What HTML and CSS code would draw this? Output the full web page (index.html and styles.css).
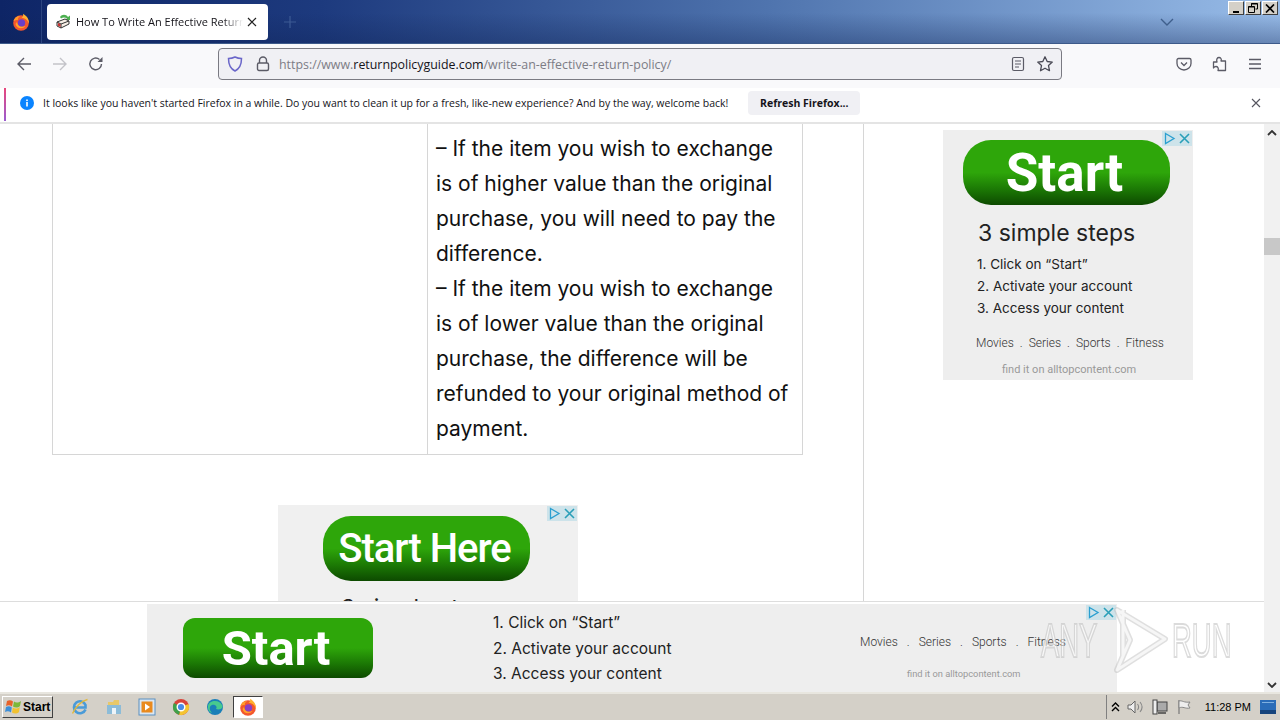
FILE: index.html
```html
<!DOCTYPE html>
<html lang="en">
    <head>
        <meta charset="UTF-8" />
        <meta name="viewport" content="width=device-width, initial-scale=1.0" />
        <title>How To Write An Effective Return Policy</title>
        <link rel="stylesheet" href="styles.css">
    </head>
    <body>
        <!-- title bar -->
        <header class="titlebar">
            <div class="ff-button">
                <svg width="18" height="18" viewBox="0 0 18 18"><circle cx="9" cy="10" r="7.8" fill="#f4572d"/><path d="M11 .8 C15 3 17.500 7 16.800 10.500 C15.500 7 13 5 9.500 4.800 C11 4 11.500 2.500 11 .8Z" fill="#ffb02e"/><path d="M1.500 8 C3 4 6 2.800 8 3.500 C6 4.500 5.500 6 6 7 C4 7 2.500 7.500 1.500 8Z" fill="#ff9c2a"/><circle cx="9.500" cy="10" r="3.700" fill="#6a3fc8"/><path d="M5 9 C5.500 13 9 15 13.500 13 C11 16.500 4.500 16 3.500 11 Z" fill="#ffa32c"/></svg>
            </div>
            <div class="tab">
                <svg class="favicon" width="16" height="16" viewBox="0 0 16 16"><path d="M4 3 C6 0 10 0 12 3 L14 1.500 L14 6 L9.500 6 L11 4.500 C9 3 7 3 5 4.500Z" fill="#4caf50"/><path d="M1 8 L9 5 L13 7 L13 10 L5 14 L1 12Z" fill="#f7efe6" stroke="#333" stroke-width="1"/><path d="M5 10 L13 7 M5 10 L5 14 M1 8 L5 10" stroke="#333" stroke-width="1" fill="none"/><path d="M2 9 L4.500 10.200 L4.500 13 L2 11.800Z" fill="#c33"/></svg>
                <span class="tab-title">How To Write An Effective Return Policy</span>
                <svg class="tab-close" width="10" height="10" viewBox="0 0 10 10"><path d="M1 1 L9 9 M9 1 L1 9" stroke="#222" stroke-width="1.200"/></svg>
            </div>
            <svg class="new-tab" width="14" height="14" viewBox="0 0 14 14"><path d="M7 1 V13 M1 7 H13" stroke="#3d5a94" stroke-width="1.200"/></svg>
            <div class="titlebar-fill"></div>
            <svg class="tabs-menu" width="14" height="8" viewBox="0 0 14 8"><path d="M1 1 L7 7 L13 1" stroke="#3f5f8c" stroke-width="1.400" fill="none"/></svg>
            <div class="win-buttons">
                <div class="win-btn"><svg width="9" height="9" viewBox="0 0 9 9"><rect x="1" y="7" width="6" height="2" fill="#000"/></svg></div>
                <div class="win-btn"><svg width="10" height="10" viewBox="0 0 10 10"><path d="M3.500 .5 H9.500 V6 H7.500 M.5 3.500 H6.500 V9.500 H.5Z M3.500 .5 V3.500" fill="none" stroke="#000"/><path d="M3 1 H9.500 M.5 4 H6.500" stroke="#000"/></svg></div>
                <div class="win-btn"><svg width="10" height="9" viewBox="0 0 10 9"><path d="M1 .5 L9 8.500 M9 .5 L1 8.500" stroke="#000" stroke-width="1.700"/></svg></div>
            </div>
        </header>

        <!-- toolbar -->
        <nav class="toolbar">
            <svg class="nav-icon" width="16" height="16" viewBox="0 0 16 16"><path d="M15 8 H2 M8 2 L2 8 L8 14" stroke="#5b5b66" stroke-width="1.400" fill="none"/></svg>
            <svg class="nav-icon" width="16" height="16" viewBox="0 0 16 16"><path d="M1 8 H14 M8 2 L14 8 L8 14" stroke="#c3c3c9" stroke-width="1.400" fill="none"/></svg>
            <svg class="nav-icon" width="16" height="16" viewBox="0 0 16 16"><path d="M13.500 8 A5.800 5.800 0 1 1 11.500 3.500" stroke="#5b5b66" stroke-width="1.400" fill="none"/><path d="M14.500 1 V6 H9.500Z" fill="#5b5b66"/></svg>
            <div class="urlbar">
                <svg class="shield" width="16" height="16" viewBox="0 0 16 16"><path d="M8 1 C10 2 12.500 2.500 14.500 2.500 C14.500 9 12 13 8 15 C4 13 1.500 9 1.500 2.500 C3.500 2.500 6 2 8 1Z" fill="none" stroke="#6a66c9" stroke-width="1.500"/></svg>
                <svg class="lock" width="14" height="16" viewBox="0 0 14 16"><path d="M3.500 7 V4.500 A3.500 3.500 0 0 1 10.500 4.500 V7" fill="none" stroke="#5b5b66" stroke-width="1.400"/><rect x="1.500" y="7" width="11" height="7.500" rx="1.500" fill="none" stroke="#5b5b66" stroke-width="1.400"/></svg>
                <span class="url"><span class="url-dim">https://www.</span>returnpolicyguide.com<span class="url-dim">/write-an-effective-return-policy/</span></span>
                <svg width="14" height="16" viewBox="0 0 14 16"><rect x="1.500" y="1.500" width="11" height="13" rx="1.500" fill="none" stroke="#5b5b66" stroke-width="1.200"/><path d="M4 5 H10 M4 8 H10 M4 11 H8" stroke="#5b5b66" stroke-width="1.200"/></svg>
                <svg class="star" width="18" height="18" viewBox="0 0 18 18"><path d="M9 1.800 L11.200 6.500 L16.300 7.100 L12.500 10.600 L13.500 15.700 L9 13.200 L4.500 15.700 L5.500 10.600 L1.700 7.100 L6.800 6.500Z" fill="none" stroke="#4a4a55" stroke-width="1.300" stroke-linejoin="round"/></svg>
            </div>
            <svg class="tool-pocket" width="16" height="16" viewBox="0 0 16 16"><path d="M2.500 2.500 H13.500 A1.500 1.500 0 0 1 15 4 V7.500 A7 6.500 0 0 1 1 7.500 V4 A1.500 1.500 0 0 1 2.500 2.500Z" fill="none" stroke="#5b5b66" stroke-width="1.300"/><path d="M5 6.500 L8 9.500 L11 6.500" fill="none" stroke="#5b5b66" stroke-width="1.300"/></svg>
            <svg class="tool-icon" width="16" height="16" viewBox="0 0 16 16"><path d="M1.500 6 H5 C4 3 5.500 1.500 7 1.500 C8.500 1.500 10 3 9 5 H13.500 V14.500 H6 C7 12 5.500 10.500 4 10.500 C3 10.500 2 11 1.500 12 Z" fill="none" stroke="#5b5b66" stroke-width="1.300" stroke-linejoin="round"/></svg>
            <svg class="tool-icon" width="14" height="12" viewBox="0 0 14 12"><path d="M1 1.500 H13 M1 6 H13 M1 10.500 H13" stroke="#5b5b66" stroke-width="1.300"/></svg>
        </nav>

        <!-- notification bar -->
        <div class="notice">
            <svg class="notice-icon" width="14" height="14" viewBox="0 0 14 14"><circle cx="7" cy="7" r="7" fill="#0a84ff"/><rect x="6.200" y="6" width="1.600" height="4.500" fill="#fff"/><rect x="6.200" y="3.500" width="1.600" height="1.600" fill="#fff"/></svg>
            <span class="notice-text">It looks like you haven't started Firefox in a while. Do you want to clean it up for a fresh, like-new experience? And by the way, welcome back!</span>
            <button class="notice-btn">Refresh Firefox...</button>
            <svg class="notice-close" width="10" height="10" viewBox="0 0 10 10"><path d="M1 1 L9 9 M9 1 L1 9" stroke="#55555f" stroke-width="1.100"/></svg>
        </div>

        <!-- page -->
        <div class="viewport">
            <div class="page">
                <div class="scrolled">
                    <main class="article">
                        <div class="policy-table">
                            <div class="cell-left"></div>
                            <div class="cell-right">
                                <p>– If the item you wish to exchange</p>
                                <p>is of higher value than the original</p>
                                <p>purchase, you will need to pay the</p>
                                <p>difference.</p>
                                <p>– If the item you wish to exchange</p>
                                <p>is of lower value than the original</p>
                                <p>purchase, the difference will be</p>
                                <p>refunded to your original method of</p>
                                <p>payment.</p>
                            </div>
                        </div>
                        <div class="inline-ad">
                            <div class="ad-badge">
                                <svg width="15" height="15" viewBox="0 0 15 15"><rect width="15" height="15" fill="#cde3ea"/><path d="M3.500 2.500 L12 7.500 L3.500 12.500Z" fill="none" stroke="#2a9fd0" stroke-width="1.300"/></svg>
                                <svg width="15" height="15" viewBox="0 0 15 15"><rect width="15" height="15" fill="#cde3ea"/><path d="M3 3 L12 12 M12 3 L3 12" stroke="#2a9fb8" stroke-width="1.600"/></svg>
                            </div>
                            <div class="start-btn start-here">Start Here</div>
                            <h3 class="steps-title inline-title">3 simple steps</h3>
                        </div>
                    </main>
                    <aside class="sidebar">
                        <div class="side-ad">
                            <div class="ad-badge">
                                <svg width="15" height="15" viewBox="0 0 15 15"><rect width="15" height="15" fill="#cde3ea"/><path d="M3.500 2.500 L12 7.500 L3.500 12.500Z" fill="none" stroke="#2a9fd0" stroke-width="1.300"/></svg>
                                <svg width="15" height="15" viewBox="0 0 15 15"><rect width="15" height="15" fill="#cde3ea"/><path d="M3 3 L12 12 M12 3 L3 12" stroke="#2a9fb8" stroke-width="1.600"/></svg>
                            </div>
                            <div class="start-btn start-side">Start</div>
                            <h3 class="steps-title">3 simple steps</h3>
                            <ol class="steps">
                                <li>1. Click on “Start”</li>
                                <li>2. Activate your account</li>
                                <li>3. Access your content</li>
                            </ol>
                            <div class="genres">
                                <span>Movies</span><span>.</span><span>Series</span><span>.</span><span>Sports</span><span>.</span><span>Fitness</span>
                            </div>
                            <div class="find-it">find it on alltopcontent.com</div>
                        </div>
                    </aside>
                </div>
                <div class="bottom-bar">
                    <div class="bottom-ad">
                        <div class="ad-badge">
                            <svg width="15" height="15" viewBox="0 0 15 15"><rect width="15" height="15" fill="#cde3ea"/><path d="M3.500 2.500 L12 7.500 L3.500 12.500Z" fill="none" stroke="#2a9fd0" stroke-width="1.300"/></svg>
                            <svg width="15" height="15" viewBox="0 0 15 15"><rect width="15" height="15" fill="#cde3ea"/><path d="M3 3 L12 12 M12 3 L3 12" stroke="#2a9fb8" stroke-width="1.600"/></svg>
                        </div>
                        <div class="start-btn start-bottom">Start</div>
                        <ol class="steps bottom-steps">
                            <li>1. Click on “Start”</li>
                            <li>2. Activate your account</li>
                            <li>3. Access your content</li>
                        </ol>
                        <div class="bottom-right">
                            <div class="genres bottom-genres">
                                <span>Movies</span><span>.</span><span>Series</span><span>.</span><span>Sports</span><span>.</span><span>Fitness</span>
                            </div>
                            <div class="find-it bottom-find">find it on alltopcontent.com</div>
                        </div>
                    </div>
                </div>
                <!-- watermark over the page -->
                <div class="watermark">
                    <span class="wm-any">ANY</span>
                    <svg class="wm-logo" width="56" height="66" viewBox="0 0 56 66">
                        <path d="M4 3 L52 32 L4 63 L17 33Z M10 3 V50" fill="none" stroke="#c4c4c4" stroke-opacity="0.55" stroke-width="6" stroke-linejoin="round"/>
                        <path d="M4 3 L52 32 L4 63 L17 33Z M10 3 V50" fill="none" stroke="#fff" stroke-opacity="0.7" stroke-width="3" stroke-linejoin="round"/>
                    </svg>
                    <span class="wm-run">RUN</span>
                </div>
            </div>
            <div class="scrollbar">
                <svg width="10" height="6" viewBox="0 0 10 6"><path d="M1 5 L5 1 L9 5" fill="none" stroke="#333" stroke-width="1.800"/></svg>
                <div class="thumb"></div>
                <svg class="scroll-down" width="10" height="6" viewBox="0 0 10 6"><path d="M1 1 L5 5 L9 1" fill="none" stroke="#333" stroke-width="1.800"/></svg>
            </div>
        </div>

        <!-- windows taskbar -->
        <footer class="taskbar">
            <div class="start">
                <svg width="17" height="16" viewBox="0 0 17 16"><path d="M2 2 C4 1 6 1 8 2.500 L7 7.500 C5 6 3 6 1 7Z" fill="#e8622a"/><path d="M9 2.500 C11 4 13 4 16 2 L15 7 C13 9 10 9 8 7.500Z" fill="#7cb83a"/><path d="M1 8 C3 7 5 7 6.800 8.500 L6 13.500 C4 12 2 12 0 13Z" fill="#3d8fd8"/><path d="M7.800 8.500 C10 10 12 10 14.800 8 L14 13 C12 15 9 15 7 13.500Z" fill="#f2c230"/></svg>
                <span>Start</span>
            </div>
            <div class="task-icons">
                <div class="task-icon"><svg width="18" height="18" viewBox="0 0 18 18"><path d="M14.500 11.500 A6 6 0 1 1 14.500 7 V9.500 H4" fill="none" stroke="#4a9bd8" stroke-width="2.600"/><path d="M1.500 15.500 C4 9 11 2.500 16.500 1.500" stroke="#e3b93a" stroke-width="1.400" fill="none"/></svg></div>
                <div class="task-icon"><svg width="18" height="18" viewBox="0 0 18 18"><path d="M3 4 H8 L9 2 H14 V8 H3Z" fill="#e8c868"/><rect x="2" y="7" width="14" height="9" fill="#8cbcd8"/><rect x="7" y="10" width="4" height="6" fill="#eef4f8"/></svg></div>
                <div class="task-icon"><svg width="18" height="18" viewBox="0 0 18 18"><rect x="1" y="1" width="16" height="16" fill="#dbe7f2" stroke="#5a8fc0"/><rect x="3.500" y="3.500" width="11" height="11" fill="#e98a1e"/><path d="M7 5.500 L12 9 L7 12.500Z" fill="#fff"/></svg></div>
                <div class="task-icon"><svg width="18" height="18" viewBox="0 0 18 18"><circle cx="9" cy="9" r="8" fill="#d9433a"/><path d="M9 9 L16.500 6 A8 8 0 0 1 7 16.800Z" fill="#f4c430"/><path d="M9 9 L7 16.800 A8 8 0 0 1 2 5Z" fill="#3fa14a"/><circle cx="9" cy="9" r="3.800" fill="#4a8be8" stroke="#fff" stroke-width="1.400"/></svg></div>
                <div class="task-icon"><svg width="18" height="18" viewBox="0 0 18 18"><circle cx="9" cy="9" r="8" fill="#1a7fb8"/><path d="M2 8 C3 2 14 1 16.500 8 C17 11 13 12 10 11 C12 9 9 6 6 7 C3 8 3 12 6 15 C3 14 1.500 11 2 8Z" fill="#48c98e"/></svg></div>
                <div class="task-icon task-active"><svg width="18" height="18" viewBox="0 0 18 18"><circle cx="9" cy="10" r="7.800" fill="#f4572d"/><path d="M11 .8 C15 3 17.500 7 16.800 10.500 C15.500 7 13 5 9.500 4.800 C11 4 11.500 2.500 11 .8Z" fill="#ffb02e"/><path d="M1.500 8 C3 4 6 2.800 8 3.500 C6 4.500 5.500 6 6 7 C4 7 2.500 7.500 1.500 8Z" fill="#ff9c2a"/><circle cx="9.500" cy="10" r="3.700" fill="#8a3fc4"/><path d="M5 9 C5.500 13 9 15 13.500 13 C11 16.500 4.500 16 3.500 11 Z" fill="#ffa32c"/></svg></div>
            </div>
            <div class="tray">
                <svg class="tray-up" width="9" height="10" viewBox="0 0 9 10"><path d="M1 4.500 L4.500 1 L8 4.500 M1 9 L4.500 5.500 L8 9" fill="none" stroke="#000" stroke-width="1.400"/></svg>
                <svg width="16" height="14" viewBox="0 0 16 14"><path d="M1 5 H4 L8 1 V13 L4 9 H1Z" fill="#eee" stroke="#666"/><path d="M10.500 4 C12 6 12 8 10.500 10 M13 2 C15.500 5 15.500 9 13 12" fill="none" stroke="#888" stroke-width="1.100"/></svg>
                <svg width="16" height="16" viewBox="0 0 16 16"><rect x="5" y="3" width="10" height="9" fill="#aaa" stroke="#444"/><rect x="1" y="1" width="4" height="14" fill="#eee" stroke="#444"/><path d="M6 14 H14" stroke="#444" stroke-width="1.500"/></svg>
                <svg width="15" height="16" viewBox="0 0 15 16"><path d="M2 1 V15" stroke="#777" stroke-width="1.200"/><path d="M2 2 C5 1 7 4 13 3 L11 6 L13 9 C8 10 6 7 2 9Z" fill="#eee" stroke="#888"/></svg>
                <span class="clock">11:28 PM</span>
                <svg class="show-desktop" width="16" height="14" viewBox="0 0 16 14"><rect width="16" height="14" fill="#2a6cb8"/><rect y="10" width="16" height="4" fill="#16447c"/><rect x="2" y="2" width="12" height="1" fill="#7fb0e0"/></svg>
            </div>
        </footer>
    </body>
</html>
```

FILE: styles.css
```css
* {
    box-sizing: border-box;
}

html,
body {
    margin: 0;
    padding: 0;
    height: 720px;
    overflow: hidden;
}

body {
    display: flex;
    flex-direction: column;
    font-family: 'Open Sans', sans-serif;
    background-color: #fff;
}

/* title bar */
.titlebar {
    display: flex;
    align-items: center;
    height: 44px;
    background:
        linear-gradient(180deg, rgba(15, 35, 85, 0) 30%, rgba(15, 35, 85, 0.35) 100%),
        linear-gradient(90deg, #0e2566 0%, #1d3a7e 25%, #4f74ae 60%, #98bce8 100%);
    border-bottom: 1px solid #3d5a8a;
}

.ff-button {
    display: flex;
    justify-content: center;
    align-items: center;
    width: 42px;
    height: 100%;
    border-right: 1px solid #2c4580;
}

.tab {
    display: flex;
    align-items: center;
    width: 221px;
    height: 36px;
    margin-left: 5px;
    padding: 0 11px 0 9px;
    background-color: #fff;
    border-radius: 4px;
}

.favicon {
    flex: none;
}

.tab-title {
    flex: 1;
    margin-left: 4px;
    overflow: hidden;
    white-space: nowrap;
    font-size: 11px;
    color: #15141a;
    -webkit-mask-image: linear-gradient(90deg, #000 88%, transparent 100%);
    mask-image: linear-gradient(90deg, #000 88%, transparent 100%);
}

.tab-close {
    flex: none;
    margin-left: 4px;
}

.new-tab {
    margin-left: 15px;
}

.titlebar-fill {
    flex: 1;
}

.tabs-menu {
    margin-right: 54px;
}

.win-buttons {
    display: flex;
    align-self: flex-start;
    gap: 1px;
    margin: 1px 2px 0 0;
}

.win-btn {
    display: flex;
    justify-content: center;
    align-items: center;
    width: 16px;
    height: 14px;
    background-color: #d4d0c8;
    border: 1px solid;
    border-color: #fff #404040 #404040 #fff;
}

/* toolbar */
.toolbar {
    display: flex;
    align-items: center;
    height: 44px;
    padding: 0 0 4px 16px;
    background-color: #f9f9fb;
}

.nav-icon {
    flex: none;
    margin-right: 20px;
}

.urlbar {
    display: flex;
    align-items: center;
    width: 844px;
    height: 32px;
    margin-left: 94px;
    padding: 0 7px 0 8px;
    background-color: #f0f0f4;
    border: 1px solid #7a7a82;
    border-radius: 4px;
}

.shield {
    flex: none;
}

.lock {
    flex: none;
    margin-left: 13px;
}

.url {
    flex: 1;
    margin-left: 9px;
    font-size: 12.4px;
    color: #15141a;
    white-space: nowrap;
}

.url-dim {
    color: #7c7c85;
}

.star {
    margin-left: 11px;
}

.tool-pocket {
    margin-left: 114px;
}

.tool-icon {
    margin-left: 20px;
}

/* notification bar */
.notice {
    display: flex;
    align-items: center;
    height: 36px;
    padding: 0 19px 4px 20px;
    background-color: #fff;
    border-bottom: 2px solid #e4e4e4;
    background-image: linear-gradient(180deg, #e8467c, #9a5cd0);
    background-size: 2px 33px;
    background-position: 4px 0;
    background-repeat: no-repeat;
}

.notice-icon {
    flex: none;
}

.notice-text {
    margin-left: 9px;
    font-size: 10.5px;
    color: #15141a;
    white-space: nowrap;
}

.notice-btn {
    width: 112px;
    height: 24px;
    margin-left: 20px;
    padding: 0;
    font-family: 'Open Sans', sans-serif;
    font-size: 10.5px;
    font-weight: 700;
    color: #15141a;
    background-color: #f0f0f4;
    border: none;
    border-radius: 4px;
}

.notice-close {
    margin-left: auto;
}

/* page */
.viewport {
    display: flex;
    flex: 1;
    min-height: 0;
}

.page {
    position: relative;
    display: flex;
    flex: 1;
    flex-direction: column;
    min-width: 0;
}

.scrolled {
    display: flex;
    flex: 1;
    min-height: 0;
    overflow: hidden;
}

.article {
    width: 864px;
    padding-left: 52px;
    border-right: 1px solid #d6d6d6;
}

.policy-table {
    display: flex;
    width: 751px;
    height: 331px;
    border: 1px solid #d6d6d6;
    border-top: none;
}

.cell-left {
    width: 375px;
    border-right: 1px solid #d6d6d6;
}

.cell-right {
    flex: 1;
    padding: 7px 0 0 8px;
    font-family: 'Inter', sans-serif;
    font-size: 21px;
    line-height: 35px;
    color: #111;
    white-space: nowrap;
}

.cell-right p {
    margin: 0;
}

.inline-ad {
    position: relative;
    display: flex;
    flex-direction: column;
    align-items: flex-start;
    width: 300px;
    height: 250px;
    margin: 50px 0 0 226px;
    padding: 11px 0 0 45px;
    background-color: #f0f0f0;
}

.ad-badge {
    position: absolute;
    top: 1px;
    right: 1px;
    display: flex;
}

.start-btn {
    display: flex;
    justify-content: center;
    align-items: center;
    color: #fff;
    font-family: 'Roboto', sans-serif;
    font-weight: 700;
    background: linear-gradient(180deg, #2ea60a 0%, #2ea60a 50%, #1c7a05 75%, #0d4a00 100%);
}

.start-here {
    flex: none;
    width: 207px;
    height: 65px;
    padding-right: 4px;
    font-size: 40px;
    font-weight: 500;
    letter-spacing: -1px;
    border-radius: 28px;
}

.sidebar {
    flex: 1;
    padding: 6px 0 0 79px;
}

.side-ad {
    position: relative;
    width: 250px;
    height: 250px;
    padding: 10px 0 0 20px;
    background-color: #eee;
}

.start-side {
    width: 207px;
    height: 65px;
    padding-right: 4px;
    font-size: 53px;
    border-radius: 28px;
}

.steps-title {
    margin: 14px 0 0 15px;
    font-family: 'Inter', sans-serif;
    font-size: 23px;
    font-weight: 400;
    line-height: 29px;
    color: #222;
}

.inline-title {
    margin: 13px 0 0 18px;
}

.steps {
    margin: 5px 0 0 14px;
    padding: 0;
    list-style: none;
    font-family: 'Inter', sans-serif;
    font-size: 13.5px;
    line-height: 22px;
    color: #222;
}

.genres {
    display: flex;
    gap: 6px;
    margin: 16px 0 0 13px;
    font-family: 'Roboto', sans-serif;
    font-size: 12px;
    font-weight: 300;
    line-height: 16px;
    color: #333;
}

.find-it {
    margin: 12px 0 0 39px;
    font-family: 'Roboto', sans-serif;
    font-size: 11px;
    line-height: 14px;
    color: #999;
}

/* sticky ad at the bottom */
.bottom-bar {
    flex: none;
    height: 91px;
    padding: 2px 0 0 147px;
    background-color: #fff;
    border-top: 1px solid #ddd;
}

.bottom-ad {
    position: relative;
    display: flex;
    width: 970px;
    height: 88px;
    background-color: #eee;
}

.start-bottom {
    flex: none;
    width: 190px;
    height: 60px;
    margin: 14px 0 0 36px;
    padding-right: 4px;
    font-size: 49px;
    border-radius: 12px;
}

.bottom-steps {
    flex: none;
    width: 181px;
    margin: 6px 0 0 120px;
    font-size: 15.5px;
    line-height: 25.5px;
    white-space: nowrap;
}

.bottom-right {
    margin-left: 186px;
}

.bottom-genres {
    gap: 9px;
    margin: 30px 0 0 0;
}

.bottom-find {
    margin: 17px 0 0 47px;
    font-size: 9.3px;
}

.watermark {
    position: absolute;
    top: 483px;
    left: 1041px;
    display: flex;
    align-items: center;
    height: 66px;
    font-family: 'Liberation Sans', sans-serif;
    font-size: 49px;
    line-height: 66px;
    color: rgba(255, 255, 255, 0.55);
    -webkit-text-stroke: 2px rgba(190, 190, 190, 0.55);
}

.wm-any,
.wm-run {
    display: inline-block;
    transform-origin: left center;
    white-space: nowrap;
}

.wm-any {
    width: 72px;
    transform: scaleX(0.56);
}

.wm-logo {
    flex: none;
}

.wm-run {
    width: 60px;
    margin-left: 3px;
    transform: scaleX(0.56);
}

.scrollbar {
    display: flex;
    flex: none;
    flex-direction: column;
    align-items: center;
    width: 16px;
    padding: 6px 0 4px;
    background-color: #f1f1f1;
}

.thumb {
    width: 16px;
    height: 17px;
    margin-top: 102px;
    background-color: #c8c8c8;
}

.scroll-down {
    margin-top: auto;
}

/* windows taskbar */
.taskbar {
    display: flex;
    flex: none;
    align-items: center;
    height: 28px;
    padding-left: 2px;
    background-color: #d4d0c8;
    border-top: 2px solid #e8e6df;
}

.start {
    display: flex;
    align-items: center;
    gap: 1px;
    width: 51px;
    height: 22px;
    padding-left: 2px;
    font-family: 'Liberation Sans', sans-serif;
    font-size: 12px;
    font-weight: 700;
    color: #000;
    border: 1px solid;
    border-color: #fff #404040 #404040 #fff;
}

.task-icons {
    display: flex;
    align-items: center;
    margin-left: 10px;
}

.task-icon {
    display: flex;
    justify-content: center;
    align-items: center;
    width: 33.8px;
    height: 22px;
}

.task-active {
    width: 30px;
    margin-left: 1px;
    background-color: #fff;
    border: 1px solid;
    border-color: #404040 #fff #fff #404040;
}

.tray {
    display: flex;
    align-items: center;
    gap: 9px;
    height: 24px;
    margin-left: auto;
    padding-left: 4px;
    border-left: 1px solid #808080;
}

.tray-up {
    margin-right: -2px;
}

.clock {
    margin-left: 4px;
    font-family: 'Liberation Sans', sans-serif;
    font-size: 11px;
    color: #000;
}

.show-desktop {
    margin: 0 4px 0 0;
}
```
